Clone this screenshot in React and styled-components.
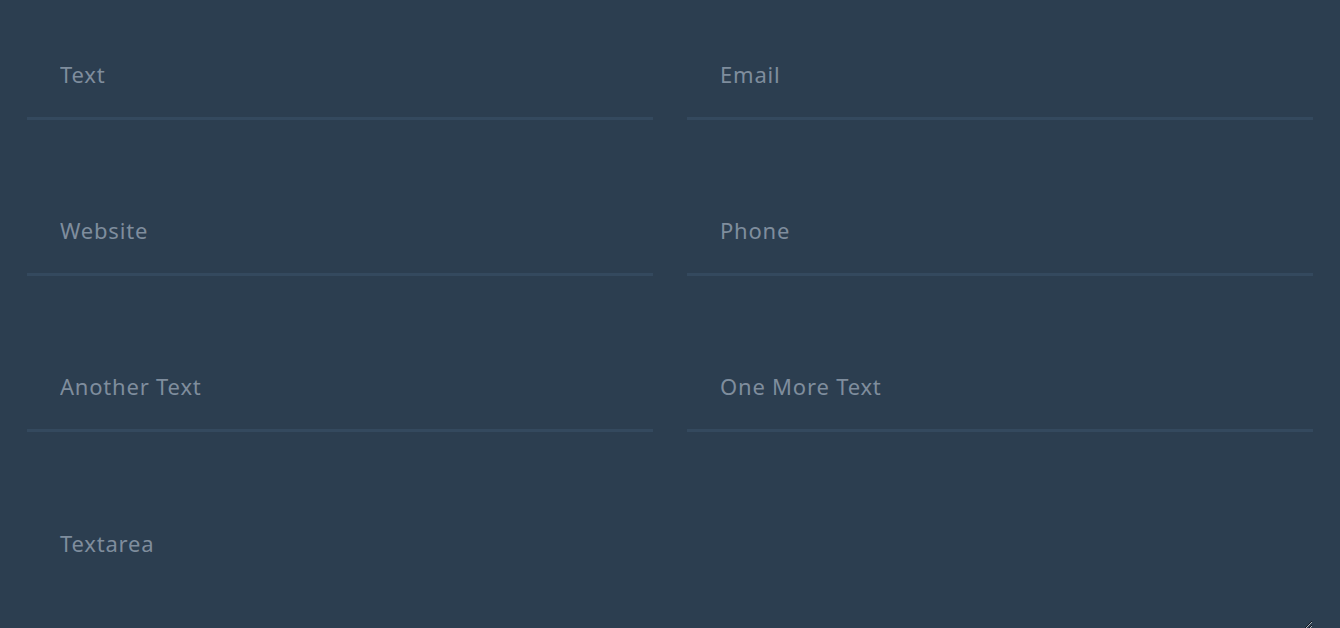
import React from "react";
import styled, { createGlobalStyle } from "styled-components";

const GlobalStyle = createGlobalStyle`
  html, body {
    margin: 0;
    padding: 0;
    background: #2c3e50;
    overflow: hidden;
  }
  * {
    box-sizing: border-box;
  }
`;

const fields = [
  { name: "text", type: "text", label: "Text" },
  { name: "email", type: "email", label: "Email" },
  { name: "website", type: "url", label: "Website" },
  { name: "phone", type: "tel", label: "Phone" },
  { name: "another", type: "text", label: "Another Text" },
  { name: "oneMore", type: "text", label: "One More Text" },
];

const App = () => {
  return (
    <>
      <GlobalStyle />
      <StForm onSubmit={(e) => e.preventDefault()}>
        {fields.map((field) => (
          <StInput
            key={field.name}
            name={field.name}
            type={field.type}
            placeholder={field.label}
          />
        ))}
        <StTextarea name="message" placeholder="Textarea" />
      </StForm>
    </>
  );
};

export default App;

const StForm = styled.form`
  display: grid;
  grid-template-columns: 1fr 1fr;
  column-gap: 34px;
  row-gap: 73px;
  padding: 37px 27px 0;
`;

const fieldBase = `
  display: block;
  width: 100%;
  background: transparent;
  border: none;
  border-bottom: 3px solid #34495e;
  outline: none;
  color: #ecf0f1;
  font-family: "Noto Sans", "Open Sans", sans-serif;
  font-size: 22px;
  letter-spacing: 0.8px;
  &::placeholder {
    color: #7f8d9d;
  }
`;

const StInput = styled.input`
  ${fieldBase}
  height: 83px;
  padding: 0 33px 6px;
`;

const StTextarea = styled.textarea`
  ${fieldBase}
  grid-column: 1 / -1;
  height: 127px;
  padding: 23px 33px 0;
  line-height: 30px;
  resize: vertical;
`;
